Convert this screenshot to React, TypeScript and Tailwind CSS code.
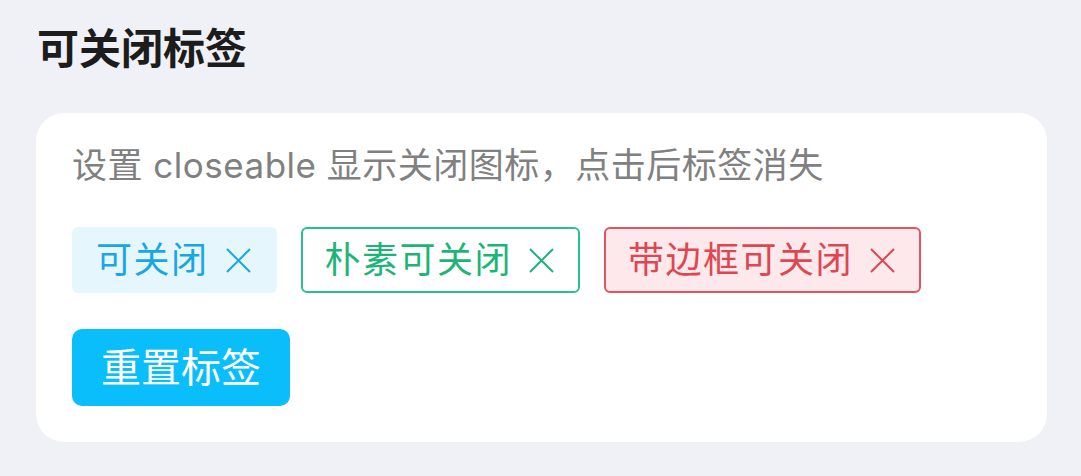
import React, { useState } from 'react';

type TagKind = 'light' | 'plain' | 'bordered';

interface TagItem {
  id: number;
  label: string;
  kind: TagKind;
}

const initialTags: TagItem[] = [
  { id: 1, label: '可关闭', kind: 'light' },
  { id: 2, label: '朴素可关闭', kind: 'plain' },
  { id: 3, label: '带边框可关闭', kind: 'bordered' },
];

const tagClass = (kind: TagKind) => {
  switch (kind) {
    case 'light':
      return 'bg-[#e5f6fd] text-[#1aa6e4] border-2 border-[#e5f6fd]';
    case 'plain':
      return 'bg-white text-[#1db477] border-2 border-[#27c28a]';
    case 'bordered':
      return 'bg-[#fde9eb] text-[#de4651] border-2 border-[#e05562]';
    default:
      return '';
  }
};

const CloseIcon = () => (
  <svg width="25" height="25" viewBox="0 0 25 25" fill="none" stroke="currentColor" strokeWidth="2">
    <path d="M1 1L24 24M24 1L1 24" />
  </svg>
);

const App: React.FC = () => {
  const [tags, setTags] = useState<TagItem[]>(initialTags);

  return (
    <div
      className="min-h-[476px] w-full bg-[#f0f1f6] pt-[28px] pb-[34px]"
      style={{ fontFamily: 'Inter, "Noto Sans CJK SC", sans-serif' }}
    >
      <h2 className="pl-[37px] text-[42px] font-bold leading-none text-[#1c1c1c]">可关闭标签</h2>
      <div className="ml-[36px] mr-[34px] mt-[43px] rounded-[28px] bg-white px-[36px] pt-[35px] pb-[36px]">
        <p className="text-[35px] leading-none tracking-[0.5px] text-[#808080]">设置 closeable 显示关闭图标，点击后标签消失</p>
        <div className="mt-[44px] flex items-center gap-[24px]">
          {tags.map((tag) => (
            <div
              key={tag.id}
              className={`flex h-[66px] items-center rounded-[6px] pl-[22px] pr-[24px] ${tagClass(tag.kind)}`}
            >
              <span className="text-[36px] leading-none tracking-[1.5px]">{tag.label}</span>
              <button
                className="ml-[17px] flex items-center"
                onClick={() => setTags(tags.filter((t) => t.id !== tag.id))}
              >
                <CloseIcon />
              </button>
            </div>
          ))}
        </div>
        <button
          className="mt-[36px] flex h-[77px] items-center rounded-[10px] bg-[#0abdfb] px-[29px] text-[40px] leading-none text-white"
          onClick={() => setTags(initialTags)}
        >
          重置标签
        </button>
      </div>
    </div>
  );
};

export default App;
